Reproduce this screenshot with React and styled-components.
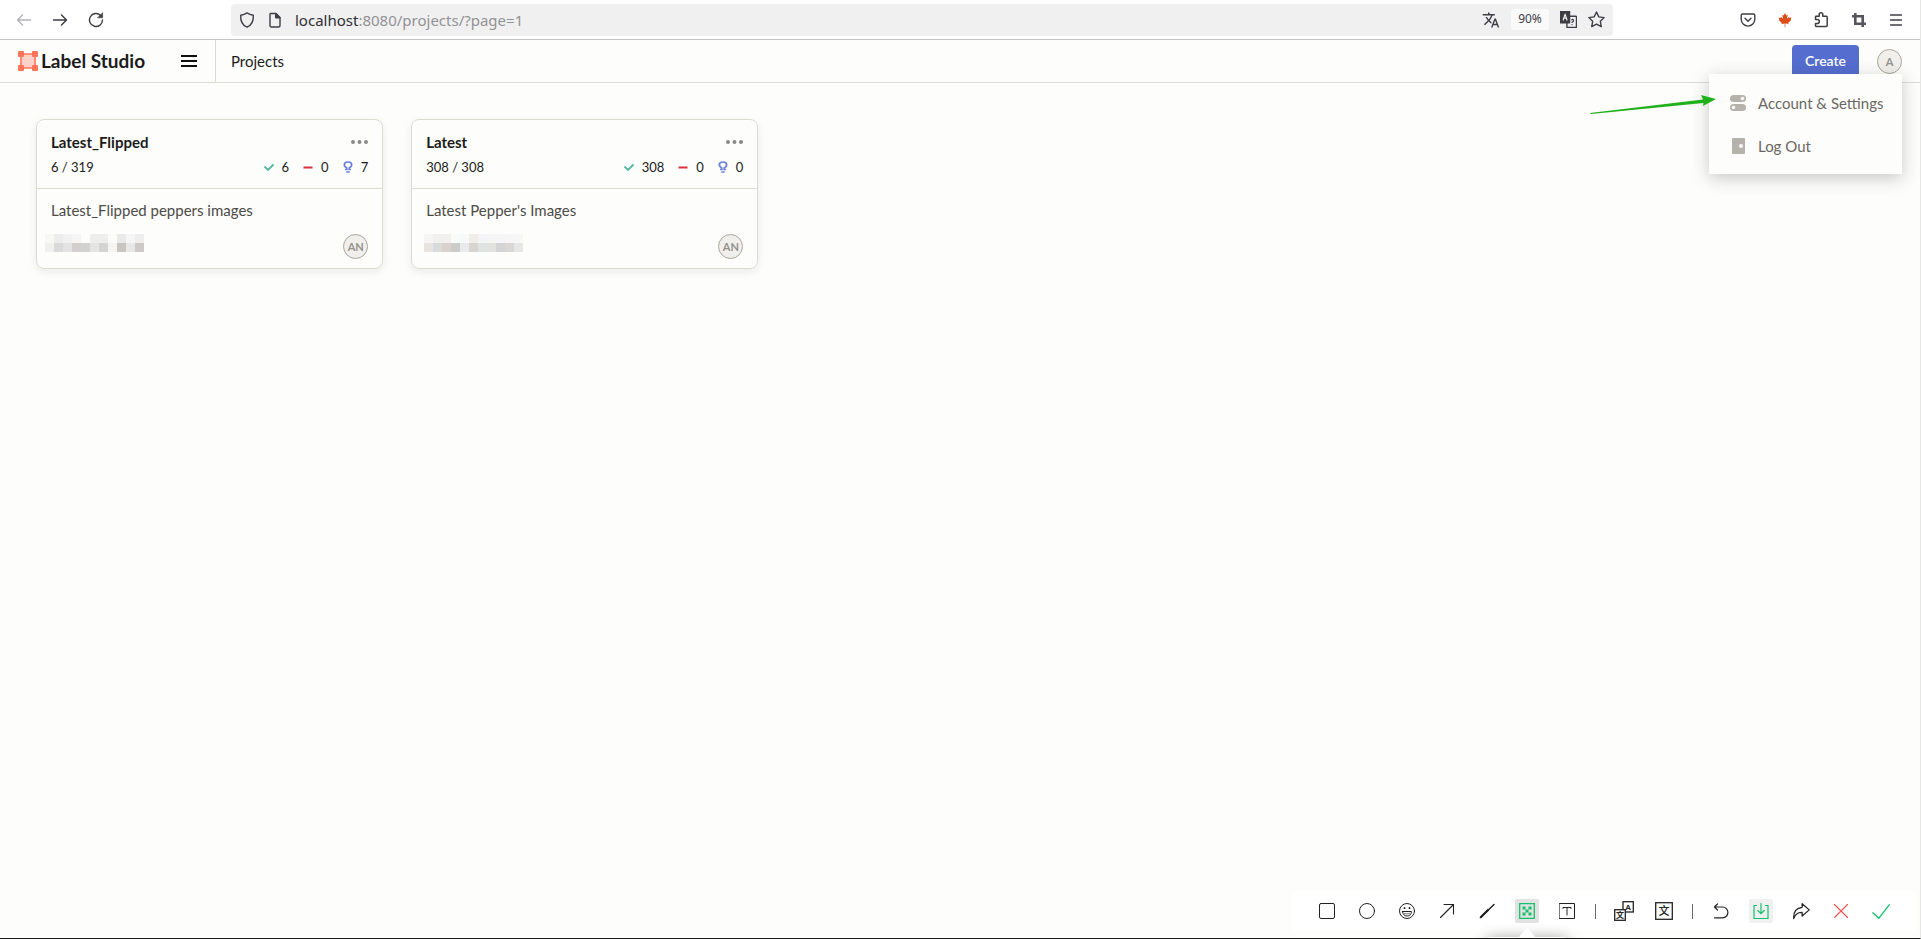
import styled, { createGlobalStyle } from "styled-components";
import { MdTranslate } from "react-icons/md";
import { FaCanadianMapleLeaf } from "react-icons/fa";

const PROJECTS = [
  {
    title: "Latest_Flipped",
    progress: "6 / 319",
    done: 6,
    skipped: 0,
    predicted: 7,
    description: "Latest_Flipped peppers images",
    inset: 8,
    mosaic: [
      ["#f7f7f6", "#ececec", "#f1f1f2", "#f5f5f5", "#fdfdfb", "#eeeeee", "#eeeeed", "#fbfbfa", "#e9e9e9", "#f5f5f5", "#eeeeee"],
      ["#f0f0ef", "#dadada", "#e3e3e3", "#d1d0ce", "#d2d2d2", "#e5e5e3", "#d4d4d4", "#f4f4f1", "#c9c5c0", "#e7e7e7", "#cbcac9"],
    ],
  },
  {
    title: "Latest",
    progress: "308 / 308",
    done: 308,
    skipped: 0,
    predicted: 0,
    description: "Latest Pepper's Images",
    inset: 12,
    mosaic: [
      ["#f5f5f4", "#f1f0ee", "#f1f0ee", "#f9fbfb", "#f8f8f8", "#eeedea", "#f4f4f6", "#f5f5f5", "#f5f5f5", "#f6f6f6", "#f7f7f7"],
      ["#e5e4df", "#d9dadb", "#d9d1cb", "#cccccb", "#e9eaee", "#d8d4cf", "#e1e3e3", "#e2e2e0", "#d4d4d6", "#d9d8d5", "#e7e7e8"],
    ],
  },
];

const Line = ({ size = 16, box = 16, children, ...rest }) => (
  <svg
    width={size}
    height={size}
    viewBox={`0 0 ${box} ${box}`}
    fill="none"
    stroke="currentColor"
    strokeLinecap="round"
    strokeLinejoin="round"
    aria-hidden="true"
    {...rest}
  >
    {children}
  </svg>
);

const BrowserBar = () => (
  <Browser>
    <ButtonGroup $gap={4}>
      <BrowserButton aria-label="Back" disabled>
        <Line strokeWidth="1.4"><path d="M14.5 8h-13M6.5 3l-5 5 5 5" /></Line>
      </BrowserButton>
      <BrowserButton aria-label="Forward">
        <Line strokeWidth="1.5"><path d="M1.5 8h13M9.5 3l5 5-5 5" /></Line>
      </BrowserButton>
      <BrowserButton aria-label="Reload">
        <Line strokeWidth="1.4">
          <path d="M12.6 3.4A6.5 6.5 0 1 0 14.5 8" />
          <path d="M14.6 1v4.8H9.8z" fill="currentColor" strokeWidth="0.6" />
        </Line>
      </BrowserButton>
    </ButtonGroup>
    <UrlBar>
      <Line strokeWidth="1.4">
        <path d="M8 .9c2 1.4 4 2 6.3 2.3.3 5-.8 9.6-6.3 12-5.5-2.400-6.600-7-6.300-12C4 2.900 6 2.300 8 .9z" />
      </Line>
      <Line strokeWidth="1.4" strokeLinejoin="miter">
        <path d="M3.5 1.5H9l4 4v8q0 1.500-1.500 1.500h-7q-1.500 0-1.500-1.500V2.500q0-1 .5-1z" />
        <path d="M8.500 1.500V6H13z" fill="currentColor" strokeWidth="1" />
      </Line>
      <Url role="textbox" aria-label="Address">
        <Host>localhost</Host>:8080/projects/?page=1
      </Url>
      <UrlTools>
        <MdTranslate size={18} />
        <Zoom>90%</Zoom>
        <Line size={17} strokeWidth="1.3">
          <rect x="6.5" y="5" width="9" height="10.500" rx="0.5" />
          <path d="M.5.5H9V11H.5z" fill="currentColor" />
          <path d="M3 8.500L4.800 3l1.800 5.500M3.500 6.700h2.600" stroke="#f0f0f1" strokeWidth="1.1" />
          <path d="M11 8.300q1.500-1 1.700.4t-1.500 2M11.300 12.700v.1" strokeWidth="1.1" />
        </Line>
        <Line size={17} strokeWidth="1.3">
          <path d="M8 .9l2.200 4.600 5 .7-3.600 3.500.9 5L8 12.300l-4.500 2.400.9-5L.8 6.200l5-.7z" />
        </Line>
      </UrlTools>
    </UrlBar>
    <ButtonGroup $gap={5}>
      <BrowserButton aria-label="Save to Pocket">
        <Line strokeWidth="1.4">
          <path d="M2.500 2h11q1.300 0 1.300 1.300v4a6.800 6.800 0 0 1-13.600 0v-4Q1.200 2 2.500 2z" />
          <path d="M5 6.300l3 3 3-3" />
        </Line>
      </BrowserButton>
      <BrowserButton aria-label="Maple extension" $color="#dd4a14">
        <FaCanadianMapleLeaf size={14} />
      </BrowserButton>
      <BrowserButton aria-label="Extensions">
        <Line strokeWidth="1.5">
          <path d="M1.500 7.500V5q0-.7.7-.7H5.200V2.600a1.800 1.800 0 0 1 3.600 0v1.700h3.500q.9 0 .9.900v8.400q0 .9-.9.9H2.400q-.9 0-.9-.9v-2h1.800a2 2 0 0 0 0-4.100z" />
        </Line>
      </BrowserButton>
      <BrowserButton aria-label="Capture" $color="#56555f">
        <Line strokeWidth="2.600" strokeLinecap="butt" strokeLinejoin="miter">
          <path d="M1 4.300h10.700V15M4.300 1v10.700H15" />
        </Line>
      </BrowserButton>
      <BrowserButton aria-label="Application menu">
        <Line strokeWidth="1.3">
          <path d="M2.500 3h11M2.500 8h11M2.500 13h11" />
        </Line>
      </BrowserButton>
    </ButtonGroup>
  </Browser>
);

const AppHeader = () => (
  <Header>
    <Brand>
      <Logo href="#">
        <svg width="20" height="20" viewBox="0 0 20 20" aria-hidden="true">
          <path d="M3 3h14v14H3z" fill="#ffd1c9" stroke="#ff7557" strokeWidth="1.6" />
          <g fill="#ff7557">
            <rect width="6" height="6" rx="1" />
            <rect x="14" width="6" height="6" rx="1" />
            <rect y="14" width="6" height="6" rx="1" />
            <rect x="14" y="14" width="6" height="6" rx="1" />
          </g>
        </svg>
        Label Studio
      </Logo>
      <MenuToggle aria-label="Toggle menu">
        <Bar />
        <Bar />
        <Bar />
      </MenuToggle>
    </Brand>
    <Crumb href="#">Projects</Crumb>
    <CreateButton>Create</CreateButton>
    <Account>
      <AvatarButton aria-label="Account">A</AvatarButton>
      <AccountMenu>
        <MenuLink href="#">
          <svg width="16" height="16" viewBox="0 0 16 16" aria-hidden="true">
            <rect width="16" height="7" rx="3.5" fill="#b4b2aa" />
            <rect y="9" width="16" height="7" rx="3.5" fill="#b4b2aa" />
            <circle cx="12.5" cy="3.5" r="1.8" fill="#fdfdfc" />
            <circle cx="3.5" cy="12.5" r="1.8" fill="#fdfdfc" />
          </svg>
          Account &amp; Settings
        </MenuLink>
        <MenuLink href="#">
          <svg width="16" height="16" viewBox="0 0 16 16" aria-hidden="true">
            <rect x="2" width="13" height="16" rx="1" fill="#b4b2aa" />
            <circle cx="11" cy="8" r="2" fill="#fdfdfc" />
          </svg>
          Log Out
        </MenuLink>
        <Pointer width="126" height="20" viewBox="0 0 126 20" aria-hidden="true">
          <path d="M0 19l113-13.500L111 1l15 4-13 7 .5-3L1 20z" fill="#1fb01b" />
        </Pointer>
      </AccountMenu>
    </Account>
  </Header>
);

const ProjectCard = ({ project }) => (
  <Card>
    <CardTop>
      <Row>
        <Title>{project.title}</Title>
        <MoreButton aria-label={`${project.title} options`}>
          <svg width="17" height="4" viewBox="0 0 17 4" fill="#898985" aria-hidden="true">
            <circle cx="2" cy="2" r="2" />
            <circle cx="8.5" cy="2" r="2" />
            <circle cx="15" cy="2" r="2" />
          </svg>
        </MoreButton>
      </Row>
      <Row>
        <Amount>{project.progress}</Amount>
        <Counts>
          <Count $color="#50b5a4">
            <Line strokeWidth="1.8" strokeLinecap="butt" strokeLinejoin="miter"><path d="M3.500 7.500L7 11l5.500-5.500" /></Line>
            {project.done}
          </Count>
          <Count $color="#d9303c">
            <Line strokeWidth="2" strokeLinecap="butt"><path d="M3.500 8.500h9" /></Line>
            {project.skipped}
          </Count>
          <Count $color="#6b7fdc">
            <Line strokeWidth="1.7" strokeLinecap="butt" strokeLinejoin="miter">
              <path d="M5 10.500h1.800V9C3.500 7.500 3.200 3 8 3s4.500 4.500 1.200 6v1.500H11M6.300 13h3.400" />
            </Line>
            {project.predicted}
          </Count>
        </Counts>
      </Row>
    </CardTop>
    <Description>{project.description}</Description>
    <CardFooter $inset={project.inset}>
      <Mosaic aria-hidden="true">
        {project.mosaic.flat().map((color, i) => (
          <Cell key={i} $color={color} />
        ))}
      </Mosaic>
      <Avatar>AN</Avatar>
    </CardFooter>
  </Card>
);

const CaptureToolbar = () => (
  <Toolbar>
    <Tool aria-label="Rectangle">
      <Line><rect x="0.5" y="0.5" width="15" height="15" rx="1.5" /></Line>
    </Tool>
    <Tool aria-label="Ellipse">
      <Line><circle cx="8" cy="8" r="7.5" /></Line>
    </Tool>
    <Tool aria-label="Emoji">
      <Line>
        <circle cx="8" cy="8" r="7.5" />
        <path d="M3.500 8.500h9q-.5 4.500-4.500 4.500T3.500 8.500z" />
        <path d="M5.500 5v.2M10.500 5v.2" strokeWidth="1.8" />
        <path d="M5.500 10.700h5" strokeWidth="0.6" />
      </Line>
    </Tool>
    <Tool aria-label="Arrow">
      <Line strokeLinejoin="miter"><path d="M1.500 14.500l13-13M5 1.500h9.500V11" strokeWidth="1.1" /></Line>
    </Tool>
    <Tool aria-label="Pen">
      <Line>
        <path d="M1.500 14.500L15 1.500" strokeWidth="1.5" />
        <path d="M2 14l7-7" strokeWidth="2.2" />
      </Line>
    </Tool>
    <Tool aria-label="Mosaic" $color="#15c26b" $background="#e2e2e2">
      <Line strokeLinejoin="miter">
        <path d="M.7.7h14.600v14.600H.7z" strokeWidth="1.3" />
        <path
          d="M3.500 3.500h3v3h-3zM9.500 3.500h3v3h-3zM6.500 6.500h3v3h-3zM3.500 9.500h3v3h-3zM9.500 9.500h3v3h-3z"
          fill="currentColor"
          stroke="none"
        />
      </Line>
      <Options />
    </Tool>
    <Tool aria-label="Text">
      <Line strokeLinejoin="miter">
        <path d="M.5.5h15v15H.5zM4 5.500v-1h8v1M8 4.500V12" />
      </Line>
    </Tool>
    <Separator />
    <Tool aria-label="Translate">
      <svg width="20" height="20" viewBox="0 0 20 20" aria-hidden="true">
        <g fill="#fff" stroke="#222" strokeWidth="1.3">
          <rect x="9" y="0.7" width="10.300" height="10.300" />
          <rect x="0.7" y="8.700" width="10.600" height="10.600" />
        </g>
        <Glyph x="14.200" y="9" $size={8}>A</Glyph>
        <Glyph x="6" y="17" $size={8}>文</Glyph>
      </svg>
    </Tool>
    <Tool aria-label="Recognize text">
      <svg width="18" height="18" viewBox="0 0 18 18" aria-hidden="true">
        <rect x="0.7" y="0.7" width="16.600" height="16.600" fill="none" stroke="#222" strokeWidth="1.3" />
        <Glyph x="9" y="13" $size={11} $weight={500}>文</Glyph>
      </svg>
    </Tool>
    <Separator />
    <Tool aria-label="Undo">
      <Line strokeWidth="1.2"><path d="M4.500 1l-3 3 3 3M2 4h7.500a5.300 5.300 0 0 1 0 10.800h-8" /></Line>
    </Tool>
    <Tool aria-label="Download" $color="#15c26b" $background="#f0f0f0">
      <Line strokeLinejoin="miter">
        <path d="M3.500 2.500H1v13h14v-13h-2.500M8 .5v10M4.800 7.500L8 10.700l3.200-3.200" strokeWidth="1.2" />
      </Line>
    </Tool>
    <Tool aria-label="Share">
      <Line size={18} strokeWidth="1.1">
        <path d="M9 1.500L15.300 7 9 12.500V9.300Q3.500 9 1.500 14.800 1 5.500 9 4.700z" />
      </Line>
    </Tool>
    <Tool aria-label="Cancel" $color="#f8504a">
      <Line><path d="M1.500 1.500l13 13M14.500 1.500l-13 13" strokeWidth="1.1" /></Line>
    </Tool>
    <Tool aria-label="Confirm" $color="#15c26b">
      <Line size={18}><path d="M.8 9.500l5.200 5L15.300 2.500" strokeWidth="1.2" /></Line>
    </Tool>
  </Toolbar>
);

const App = () => (
  <Page>
    <GlobalStyle />
    <BrowserBar />
    <AppHeader />
    <Main>
      {PROJECTS.map((project) => (
        <ProjectCard key={project.title} project={project} />
      ))}
    </Main>
    <CaptureToolbar />
  </Page>
);

const GlobalStyle = createGlobalStyle`
  * {
    box-sizing: border-box;
  }
  body {
    margin: 0;
    background: #fdfdfb;
    color: #1b1b1a;
    font: 15px/20px Lato, "Liberation Sans", sans-serif;
  }
  button {
    padding: 0;
    border: none;
    background: none;
    color: inherit;
    font: inherit;
  }
  a {
    color: inherit;
    text-decoration: none;
  }
  svg {
    flex: none;
    display: block;
  }
`;

const Page = styled.div`
  min-height: 100vh;
  display: flex;
  flex-direction: column;
  border-right: 1px solid #e6e6e4;
  border-bottom: 1px solid #1c1c17;
  overflow: hidden;
`;

const Browser = styled.div`
  height: 40px;
  padding: 0 8px;
  display: flex;
  align-items: center;
  background: #fff;
  border-bottom: 1px solid #c4c4c6;
  color: #3f3e45;
  font-family: "Noto Sans", "Open Sans", sans-serif;
`;
const ButtonGroup = styled.div`
  display: flex;
  gap: ${({ $gap }) => $gap}px;
`;
const BrowserButton = styled.button`
  width: 32px;
  height: 32px;
  display: flex;
  align-items: center;
  justify-content: center;
  color: ${({ $color }) => $color || "#3f3e45"};
  &:disabled {
    color: #b3b3b6;
  }
`;
const UrlBar = styled.div`
  flex: 1;
  height: 32px;
  margin: 0 119px;
  padding: 0 8px;
  display: flex;
  align-items: center;
  gap: 12px;
  border-radius: 4px;
  background: #f0f0f1;
`;
const Url = styled.span`
  flex: 1;
  color: #929294;
  white-space: nowrap;
`;
const Host = styled.span`
  color: #2f2e33;
`;
const UrlTools = styled.div`
  display: flex;
  align-items: center;
  gap: 11px;
`;
const Zoom = styled.span`
  width: 38px;
  height: 21px;
  border-radius: 3px;
  background: #fafafb;
  font-size: 12px;
  text-align: center;
`;

const Header = styled.header`
  height: 43px;
  padding: 0 18px;
  display: flex;
  align-items: center;
  border-bottom: 1px solid #dddcd3;
`;
const Brand = styled.div`
  width: 197px;
  padding-right: 9px;
  display: flex;
  align-items: center;
  justify-content: space-between;
`;
const Logo = styled.a`
  display: flex;
  align-items: center;
  gap: 3px;
  font-size: 19px;
  font-weight: 700;
  white-space: nowrap;
`;
const MenuToggle = styled.button`
  width: 34px;
  height: 42px;
  display: flex;
  flex-direction: column;
  align-items: center;
  justify-content: center;
  gap: 3px;
`;
const Bar = styled.span`
  width: 16px;
  height: 2px;
  background: #0f0f0e;
`;
const Crumb = styled.a`
  height: 42px;
  padding: 0 15px;
  border-left: 1px solid #dddcd3;
  line-height: 42px;
`;
const CreateButton = styled.button`
  width: 67px;
  height: 32px;
  margin-left: auto;
  border-radius: 4px;
  background: #556dcf;
  color: #fff;
  font-size: 14px;
  font-weight: 600;
`;
const Account = styled.div`
  position: relative;
  margin-left: 18px;
`;
const avatarStyle = `
  width: 25px;
  height: 25px;
  border: 1px solid #a9a69d;
  border-radius: 50%;
  background: #f0efec;
  color: #94928c;
  font-size: 11px;
  font-weight: 700;
  line-height: 23px;
  text-align: center;
`;
const AvatarButton = styled.button`
  ${avatarStyle}
  display: block;
`;
const Avatar = styled.span`
  ${avatarStyle}
`;
const AccountMenu = styled.nav`
  position: absolute;
  top: 100%;
  right: 0;
  z-index: 1;
  padding: 8px 0 6px;
  background: #fdfdfc;
  box-shadow: 0 4px 16px rgba(30, 30, 25, 0.24);
`;
const MenuLink = styled.a`
  width: 193px;
  height: 43px;
  padding-left: 21px;
  display: flex;
  align-items: center;
  gap: 12px;
  color: #6a6863;
`;
const Pointer = styled.svg`
  position: absolute;
  top: 20px;
  right: 186px;
`;

const Main = styled.main`
  flex: 1;
  padding: 36px;
  display: grid;
  grid-template-columns: repeat(auto-fill, minmax(330px, 1fr));
  align-content: start;
  gap: 28px;
`;
const Card = styled.article`
  border: 1px solid #dddcd3;
  border-radius: 8px;
  box-shadow: 0 3px 8px rgba(30, 30, 25, 0.08);
`;
const CardTop = styled.div`
  padding: 12px 14px 11px;
  display: flex;
  flex-direction: column;
  gap: 5px;
  border-bottom: 1px solid #dddcd3;
`;
const Row = styled.div`
  display: flex;
  align-items: center;
  justify-content: space-between;
`;
const Title = styled.h2`
  margin: 0;
  font-size: 15px;
  font-weight: 700;
`;
const MoreButton = styled.button`
  height: 20px;
`;
const Amount = styled.span`
  font-size: 13px;
`;
const Counts = styled.div`
  display: flex;
  gap: 11px;
  font-size: 13px;
`;
const Count = styled.span`
  display: flex;
  align-items: center;
  gap: 5px;
  svg {
    color: ${({ $color }) => $color};
  }
`;
const Description = styled.p`
  margin: 0;
  padding: 11px 14px 14px;
  color: #4c4b48;
`;
const CardFooter = styled.div`
  padding: 0 14px 9px ${({ $inset }) => $inset}px;
  display: flex;
  justify-content: space-between;
`;
const Mosaic = styled.div`
  display: grid;
  grid-template-columns: repeat(11, 9px);
  grid-auto-rows: 9px;
`;
const Cell = styled.span`
  background: ${({ $color }) => $color};
`;

const Toolbar = styled.div`
  align-self: flex-end;
  height: 40px;
  margin: 0 3px 7px;
  padding: 0 24px;
  display: flex;
  align-items: center;
  gap: 16px;
  border-radius: 4px;
  background: #fff;
`;
const Tool = styled.button`
  position: relative;
  width: 24px;
  height: 24px;
  display: flex;
  align-items: center;
  justify-content: center;
  border-radius: 2px;
  background: ${({ $background }) => $background || "none"};
  color: ${({ $color }) => $color || "#222"};
`;
const Separator = styled.span`
  width: 1px;
  height: 15px;
  background: #6c6c6c;
`;
const Glyph = styled.text`
  fill: #222;
  font-family: "Liberation Sans", "Noto Sans CJK SC", sans-serif;
  font-size: ${({ $size }) => $size}px;
  font-weight: ${({ $weight }) => $weight || 700};
  text-anchor: middle;
`;
const Options = styled.span`
  position: absolute;
  top: 38px;
  left: -28px;
  width: 80px;
  height: 40px;
  border-radius: 4px;
  background: #fff;
  box-shadow: 0 0 14px rgba(0, 0, 0, 0.3);
  &::before {
    content: "";
    position: absolute;
    top: -10px;
    left: 32px;
    border: 8px solid transparent;
    border-top: none;
    border-bottom: 10px solid #fff;
  }
`;

export default App;
